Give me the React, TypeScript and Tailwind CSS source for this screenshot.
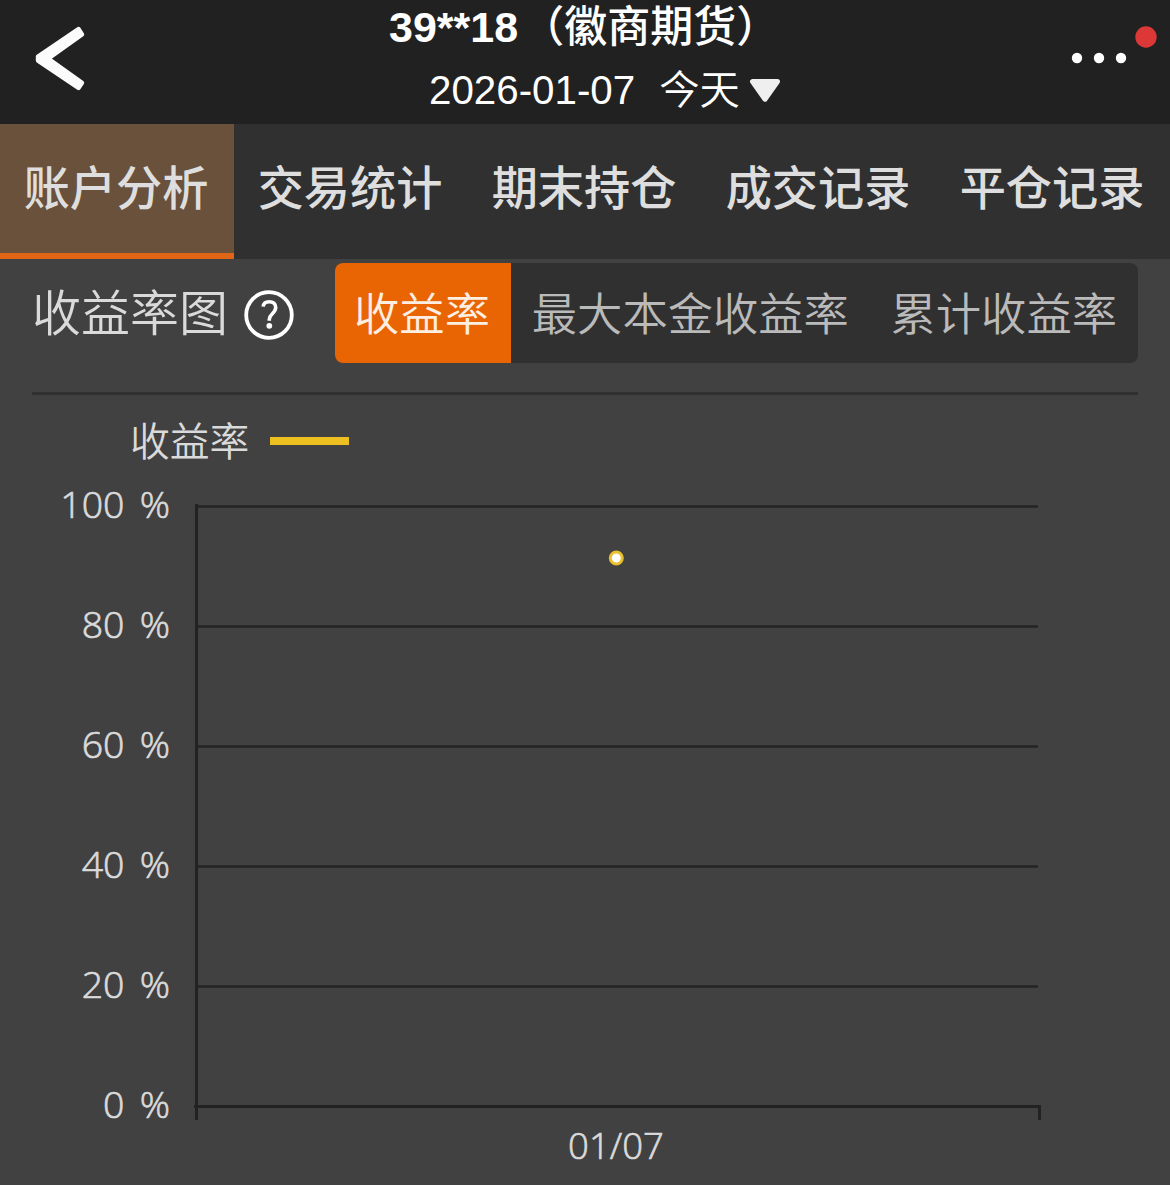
import React from 'react';

const TABS = ['账户分析', '交易统计', '期末持仓', '成交记录', '平仓记录'];
const MODES = ['收益率', '最大本金收益率', '累计收益率'];
const TICKS = [100, 80, 60, 40, 20, 0];

function Header() {
  return (
    <header className="flex h-[124px] justify-between bg-[#212121] text-white">
      <button className="flex w-[120px] items-start pl-[32px] pt-[24px]" aria-label="返回">
        <svg width="56" height="70" viewBox="0 0 56 70">
          <path
            d="M46.5 5 50 10.4 16 34.6 50 58.8 46.5 64 6 36.6V32.6z"
            fill="#fbfbfb"
            stroke="#fbfbfb"
            strokeWidth="4.4"
            strokeLinejoin="round"
          />
        </svg>
      </button>

      <div className="flex w-[700px] flex-col whitespace-pre">
        <h1 className="flex h-[58px] pl-[149px] text-[43px] font-bold leading-[54px]">
          <span>39**18</span>
          <span className="ml-[3px] font-medium">（徽商期货）</span>
        </h1>
        <div className="flex h-[66px] items-center pl-[189px] text-[40.3px] leading-[66px]">
          <span>2026-01-07</span>
          <span className="ml-[24px] font-[350] leading-[68px]">今天</span>
          <svg className="ml-[9px]" width="32" height="26" viewBox="0 0 32 26">
            <path
              d="M3.5 3.5h25L16 21.2z"
              fill="#efefef"
              stroke="#efefef"
              strokeWidth="5"
              strokeLinejoin="round"
            />
          </svg>
        </div>
      </div>

      <button className="w-[110px]" aria-label="更多">
        <svg width="110" height="124" viewBox="0 0 110 124">
          <circle cx="17" cy="58" r="5.2" fill="#fff" />
          <circle cx="39" cy="58" r="5.2" fill="#fff" />
          <circle cx="61" cy="58" r="5.2" fill="#fff" />
          <circle cx="86" cy="37" r="10.7" fill="#dc3838" />
        </svg>
      </button>
    </header>
  );
}

function TabBar() {
  return (
    <nav className="grid h-[135px] grid-cols-5 bg-[#303030]">
      {TABS.map((tab, i) => (
        <button
          key={tab}
          className={`h-[135px] whitespace-nowrap border-b-6 pr-[2px] pt-[2px] text-[46.2px] font-medium leading-[127px] text-[#dedede] ${
            i === 0 ? 'border-[#e06516] bg-[#6a513b]' : 'border-transparent'
          }`}
        >
          {tab}
        </button>
      ))}
    </nav>
  );
}

function ModeSwitch() {
  return (
    <div className="flex h-[100px] w-[803px] overflow-hidden rounded-lg bg-[#303030]">
      {MODES.map((mode, i) => (
        <button
          key={mode}
          className={`whitespace-nowrap pt-[3px] text-[45.3px] font-[350] leading-[100px] ${
            i === 0 ? 'w-[176px] bg-[#e96504] pr-[2px] text-[#fdeee2]' : 'px-[20.8px] text-[#bababa]'
          }`}
        >
          {mode}
        </button>
      ))}
    </div>
  );
}

function Chart() {
  return (
    <svg width="1170" height="713" viewBox="0 472 1170 713" className="block">
      {/* Grid lines and tick labels */}
      {TICKS.map((tick, i) => {
        const y = 506.5 + i * 120;
        return (
          <g key={tick}>
            {tick > 0 && <path d={`M196 ${y}H1038`} stroke="#242424" strokeWidth="2.6" />}
            <text
              x="170"
              y={y + 11}
              textAnchor="end"
              className="fill-[#dadada] stroke-[#dadada] font-['Open_Sans','Noto_Sans',sans-serif] text-[37.5px] font-light"
              strokeWidth="0.7"
              wordSpacing="5.5"
            >
              {tick} %
            </text>
          </g>
        );
      })}

      {/* Axes */}
      <path d="M196.5 504V1120M194 1106.5H1039.5V1120" fill="none" stroke="#222" strokeWidth="3" />
      <text
        x="616"
        y="1159"
        textAnchor="middle"
        className="fill-[#dadada] stroke-[#dadada] font-['Open_Sans','Noto_Sans',sans-serif] text-[36.5px] font-light"
        strokeWidth="0.7"
      >
        01/07
      </text>

      <circle cx="616.3" cy="558" r="6" fill="#fff" stroke="#eac02c" strokeWidth="3" />
    </svg>
  );
}

export default function App() {
  return (
    <div className="h-[1185px] w-[1170px] overflow-hidden bg-[#414141] font-['Liberation_Sans','Noto_Sans_CJK_SC',sans-serif]">
      <Header />
      <TabBar />

      <section className="mx-8 flex h-[136px] items-start justify-between border-b-3 border-[#303030] pt-1">
        <div className="flex items-center">
          <h2 className="whitespace-nowrap text-[49px] font-[350] leading-[102px] text-[#dadada]">
            收益率图
          </h2>
          <svg className="ml-[15px] mt-[2px]" width="52" height="52" viewBox="0 0 52 52">
            <circle cx="26" cy="26" r="22.8" fill="none" stroke="#fff" strokeWidth="3.8" />
            <path
              d="M20.2 17.6c.4-3.4 2.6-4.9 5.9-4.9 4 0 6.6 2.1 6.6 5.9 0 5.8-6.4 6.4-6.4 11.6v1.6"
              fill="none"
              stroke="#fff"
              strokeWidth="3.6"
            />
            <circle cx="26.3" cy="36.8" r="2.9" fill="#fff" />
          </svg>
        </div>
        <ModeSwitch />
      </section>

      {/* Legend */}
      <div className="flex h-[77px] items-center pl-[130px] pt-[14px]">
        <span className="w-[119px] whitespace-nowrap pt-[4px] text-[39.8px] font-[350] leading-none text-[#dadada]">
          收益率
        </span>
        <span className="ml-[21px] h-2 w-[79px] bg-[#edbf20]" />
      </div>

      <Chart />
    </div>
  );
}
